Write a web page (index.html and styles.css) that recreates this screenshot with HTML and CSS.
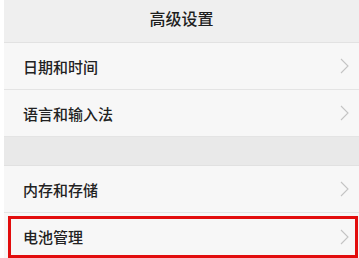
FILE: index.html
```html
<!DOCTYPE html>
<html lang="zh">
<head>
<meta charset="utf-8">
<link rel="stylesheet" href="styles.css">
</head>
<body>
<div class="screen">
  <div class="header">高级设置</div>
  <div class="row"><span class="label">日期和时间</span><svg class="chev" width="9" height="16" viewBox="0 0 9 16"><polyline points="1,1 8,8 1,15" fill="none" stroke="#c4c4c4" stroke-width="1.1"/></svg></div>
  <div class="row"><span class="label">语言和输入法</span><svg class="chev" width="9" height="16" viewBox="0 0 9 16"><polyline points="1,1 8,8 1,15" fill="none" stroke="#c4c4c4" stroke-width="1.1"/></svg></div>
  <div class="gap"></div>
  <div class="row"><span class="label">内存和存储</span><svg class="chev" width="9" height="16" viewBox="0 0 9 16"><polyline points="1,1 8,8 1,15" fill="none" stroke="#c4c4c4" stroke-width="1.1"/></svg></div>
  <div class="row last highlight"><span class="label">电池管理</span><svg class="chev" width="9" height="16" viewBox="0 0 9 16"><polyline points="1,1 8,8 1,15" fill="none" stroke="#c4c4c4" stroke-width="1.1"/></svg></div>
</div>
</body>
</html>
```
FILE: styles.css
```css
html, body {
  margin: 0;
  padding: 0;
  background: #ffffff;
}
body {
  font-family: "Noto Sans CJK SC", "Noto Sans", sans-serif;
  color: #222222;
}
.screen {
  margin-left: 4px;
  width: 355px;
  height: 258px;
  overflow: hidden;
  background: #f7f7f7;
}
.header {
  height: 42px;
  line-height: 37px;
  text-align: center;
  font-size: 16px;
  font-weight: 500;
  background: #efefef;
  border-bottom: 1px solid #e2e2e2;
  color: #1e1e1e;
}
.row {
  position: relative;
  height: 46px;
  display: flex;
  align-items: center;
  justify-content: space-between;
  padding: 0 10px 0 19px;
  background: #f7f7f7;
  border-bottom: 1px solid #e4e4e4;
  font-size: 15px;
  font-weight: 500;
}
.row .label {
  line-height: 1;
}
.gap {
  height: 28px;
  background: #e9e9e9;
  border-bottom: 1px solid #e1e1e1;
}
.row.last {
  border-bottom: none;
  height: 45px;
  margin-top: 1px;
}
.highlight::after {
  content: "";
  position: absolute;
  left: 4px;
  right: 1px;
  top: 2px;
  bottom: 1px;
  border: 3px solid #e20d0d;
}
.chev {
  display: block;
}
```
